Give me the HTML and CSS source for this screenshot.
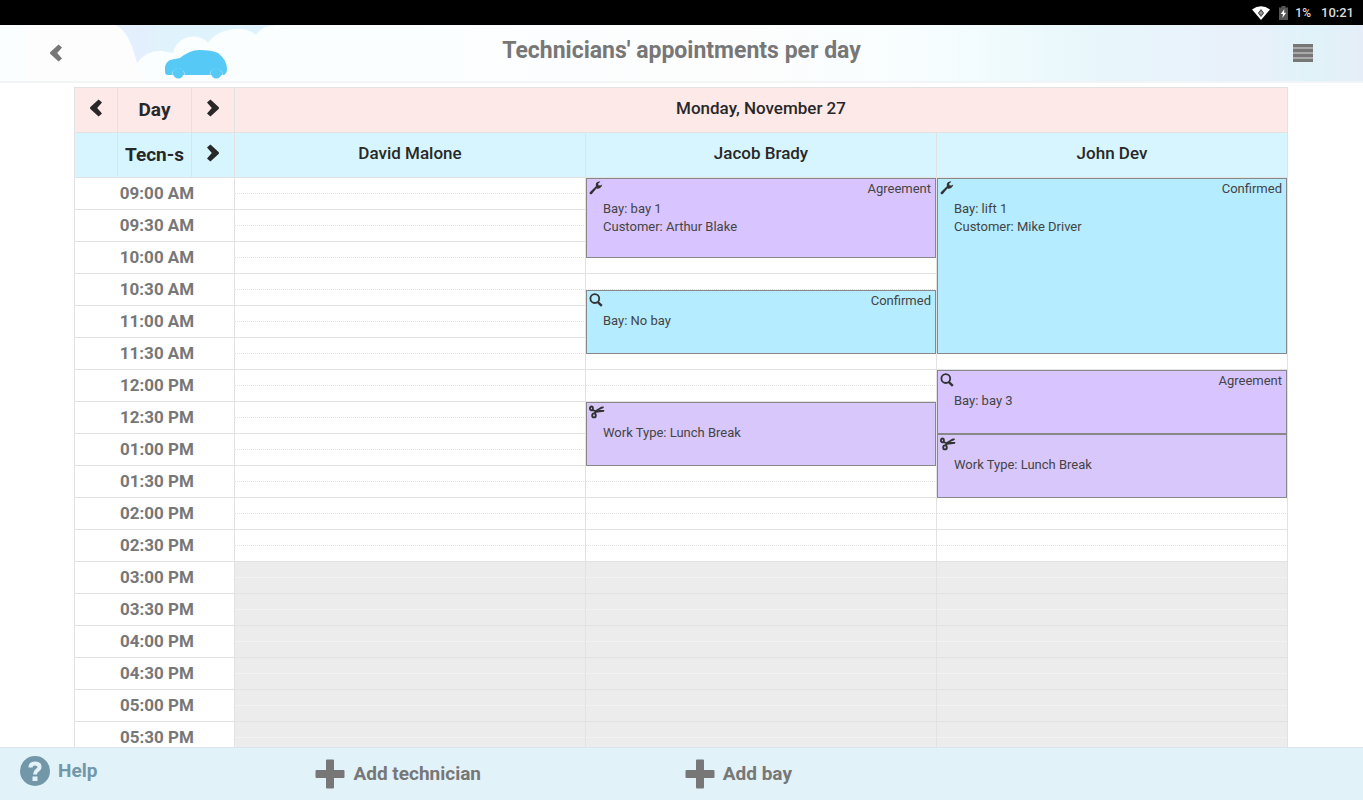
FILE: index.html
```html
<!DOCTYPE html>
<html lang="en">
<head>
    <meta charset="UTF-8">
    <meta name="viewport" content="width=device-width, initial-scale=1">
    <title>Technicians' appointments per day</title>
    <link rel="stylesheet" href="styles.css">
</head>
<body>
    <!-- shared icons -->
    <svg class="sprite" aria-hidden="true">
        <symbol id="chevron-left" viewBox="0 0 12 18">
            <path d="M8.6 0.4 L12 3.6 L7.2 9 L12 14.4 L8.6 17.6 L0.4 10 Q-0.4 9 0.4 8 Z"/>
        </symbol>
        <symbol id="chevron-right" viewBox="0 0 12 18">
            <path d="M3.4 0.4 L0 3.6 L4.8 9 L0 14.4 L3.4 17.6 L11.6 10 Q12.4 9 11.6 8 Z"/>
        </symbol>
        <symbol id="wrench" viewBox="0 0 14 14">
            <path d="M11.4 0.8 C9.6 0 7 1.2 6.8 3.6 L6.9 5.2 L0.8 11.2 C0 12.2 1.6 14 2.8 13.1 L7.4 7.6 C9.6 7.9 12.6 7 13.2 3.4 L11.4 4.6 L9.4 4.2 L9.2 2.6 Z"/>
        </symbol>
        <symbol id="search" viewBox="0 0 14 14">
            <circle cx="5.8" cy="5.6" r="4.4" fill="none" stroke="currentColor" stroke-width="1.8"/>
            <path d="M8.6 8.8 L12.8 12.8" stroke="currentColor" stroke-width="2.4"/>
        </symbol>
        <symbol id="scissors" viewBox="0 0 16 14">
            <g fill="none" stroke="currentColor" stroke-width="1.9">
                <ellipse cx="2.4" cy="3.4" rx="1.5" ry="1.9"/>
                <ellipse cx="5" cy="10.4" rx="1.8" ry="2"/>
                <path d="M3.6 5.2 L7 6.2 L5.6 8.6"/>
            </g>
            <path d="M6.4 5.2 L12.6 1.6 L15 1.8 L14.6 3 L10 5 L15.4 5 L15 6.8 L7 7.8 Z"/>
        </symbol>
        <symbol id="plus" viewBox="0 0 30 30">
            <path d="M12 0.5 H18 Q19 0.5 19 1.5 V11 H28.5 Q29.5 11 29.5 12 V18 Q29.5 19 28.5 19 H19 V28.5 Q19 29.5 18 29.5 H12 Q11 29.5 11 28.5 V19 H1.5 Q0.5 19 0.5 18 V12 Q0.5 11 1.5 11 H11 V1.5 Q11 0.5 12 0.5 Z"/>
        </symbol>
    </svg>

    <div class="status-bar">
        <svg class="wifi" viewBox="0 0 18 14">
            <path d="M0 3.6 Q9 -3 18 3.6 L9 14 Z" fill="#fff"/>
            <path d="M9 3 L12 7 L9 11 L6 7 Z" fill="#333"/>
            <path d="M9 4.6 V9.6 M7 7 H11" stroke="#bbb" stroke-width="1"/>
        </svg>
        <svg class="battery" viewBox="0 0 9 14">
            <path d="M2.5 0 H6.5 V1.5 H9 V14 H0 V1.5 H2.5 Z" fill="#555"/>
            <path d="M5.4 3 L1.8 8 H4 L3.4 12 L7.2 6.8 H5 Z" fill="#fff"/>
        </svg>
        <span>1%</span>
        <span class="clock">10:21</span>
    </div>

    <header class="header">
        <svg class="header-art" viewBox="0 0 300 56" aria-hidden="true">
            <defs>
                <linearGradient id="sky">
                    <stop offset="0" stop-color="#e6f0fd"/>
                    <stop offset="0.2" stop-color="#e4effd"/>
                    <stop offset="0.3" stop-color="#e0f3fc"/>
                    <stop offset="1" stop-color="#dff3fd"/>
                </linearGradient>
            </defs>
            <path d="M112 0 H275 L262 10 V56 H136 Z" fill="url(#sky)"/>
            <path d="M137 38 Q146 25 162 26 Q168 27 173 28 C178 8 200 8 208 18 C218 2 246 0 256 10 Q262 0 278 0 H300 V56 H130 Z" fill="#fbfeff"/>
            <path d="M28 0 H114 C126 2 133 22 137 38 L145 56 H28 Z" fill="#fdfdfe"/>
            <path d="M165 47 V42 Q166 37 170 35 L180 33 Q190 25 199 25 Q212 25 218 28 Q223 32 225 36 Q227 40 227 44 Q227 48 224 50 H168 Q165 50 165 47 Z" fill="#56c9f6"/>
            <g fill="#56c9f6" stroke="#a3e1fa" stroke-width="1">
                <path d="M172 50 A6.300 6.300 0 1 1 184.600 50"/>
                <path d="M210 50 A6.300 6.300 0 1 1 222.600 50"/>
            </g>
            <circle cx="178.300" cy="48.200" r="5.200" fill="#56c9f6"/>
            <circle cx="216.300" cy="48.200" r="5.200" fill="#56c9f6"/>
        </svg>
        <button type="button" class="icon-btn back" aria-label="Back"><svg class="chevron"><use href="#chevron-left"/></svg></button>
        <h1>Technicians' appointments per day</h1>
        <button type="button" class="icon-btn menu" aria-label="Menu">
            <svg viewBox="0 0 20 20">
                <path d="M0 2.500 H20 M0 7.500 H20 M0 12.500 H20 M0 17.500 H20" stroke="#777" stroke-width="3"/>
                <path d="M0 5 H20 M0 10 H20 M0 15 H20" stroke="#aaa" stroke-width="2"/>
            </svg>
        </button>
    </header>

    <main class="calendar">
        <table>
            <colgroup>
                <col class="col-arrow">
                <col class="col-label">
                <col class="col-arrow">
                <col>
                <col>
                <col>
            </colgroup>
            <thead>
                <tr class="day-row">
                    <td><button type="button" class="icon-btn" aria-label="Previous day"><svg class="chevron"><use href="#chevron-left"/></svg></button></td>
                    <th class="label">Day</th>
                    <td><button type="button" class="icon-btn" aria-label="Next day"><svg class="chevron"><use href="#chevron-right"/></svg></button></td>
                    <th colspan="3">Monday, November 27</th>
                </tr>
                <tr class="tech-row">
                    <td></td>
                    <th class="label">Tecn-s</th>
                    <td><button type="button" class="icon-btn" aria-label="Next technicians"><svg class="chevron"><use href="#chevron-right"/></svg></button></td>
                    <th>David Malone</th>
                    <th>Jacob Brady</th>
                    <th>John Dev</th>
                </tr>
            </thead>
            <tbody>
                <tr>
                    <th colspan="3">09:00 AM</th>
                    <td></td>
                    <td>
                        <div class="event agreement slots-2-5">
                            <svg class="event-icon"><use href="#wrench"/></svg>
                            <span class="event-status">Agreement</span>
                            <p>Bay: bay 1</p>
                            <p>Customer: Arthur Blake</p>
                        </div>
                    </td>
                    <td>
                        <div class="event confirmed slots-5-5">
                            <svg class="event-icon"><use href="#wrench"/></svg>
                            <span class="event-status">Confirmed</span>
                            <p>Bay: lift 1</p>
                            <p>Customer: Mike Driver</p>
                        </div>
                    </td>
                </tr>
                <tr><th colspan="3">09:30 AM</th><td></td><td></td><td></td></tr>
                <tr><th colspan="3">10:00 AM</th><td></td><td></td><td></td></tr>
                <tr>
                    <th colspan="3">10:30 AM</th>
                    <td></td>
                    <td>
                        <div class="event confirmed slots-2 half">
                            <svg class="event-icon"><use href="#search"/></svg>
                            <span class="event-status">Confirmed</span>
                            <p>Bay: No bay</p>
                        </div>
                    </td>
                    <td></td>
                </tr>
                <tr><th colspan="3">11:00 AM</th><td></td><td></td><td></td></tr>
                <tr><th colspan="3">11:30 AM</th><td></td><td></td><td></td></tr>
                <tr>
                    <th colspan="3">12:00 PM</th>
                    <td></td>
                    <td></td>
                    <td>
                        <div class="event agreement slots-2">
                            <svg class="event-icon"><use href="#search"/></svg>
                            <span class="event-status">Agreement</span>
                            <p>Bay: bay 3</p>
                        </div>
                    </td>
                </tr>
                <tr>
                    <th colspan="3">12:30 PM</th>
                    <td></td>
                    <td>
                        <div class="event break slots-2">
                            <svg class="event-icon scissors"><use href="#scissors"/></svg>
                            <p>Work Type: Lunch Break</p>
                        </div>
                    </td>
                    <td></td>
                </tr>
                <tr>
                    <th colspan="3">01:00 PM</th>
                    <td></td>
                    <td></td>
                    <td>
                        <div class="event break slots-2">
                            <svg class="event-icon scissors"><use href="#scissors"/></svg>
                            <p>Work Type: Lunch Break</p>
                        </div>
                    </td>
                </tr>
                <tr><th colspan="3">01:30 PM</th><td></td><td></td><td></td></tr>
                <tr><th colspan="3">02:00 PM</th><td></td><td></td><td></td></tr>
                <tr><th colspan="3">02:30 PM</th><td></td><td></td><td></td></tr>
                <tr class="closed"><th colspan="3">03:00 PM</th><td></td><td></td><td></td></tr>
                <tr class="closed"><th colspan="3">03:30 PM</th><td></td><td></td><td></td></tr>
                <tr class="closed"><th colspan="3">04:00 PM</th><td></td><td></td><td></td></tr>
                <tr class="closed"><th colspan="3">04:30 PM</th><td></td><td></td><td></td></tr>
                <tr class="closed"><th colspan="3">05:00 PM</th><td></td><td></td><td></td></tr>
                <tr class="closed"><th colspan="3">05:30 PM</th><td></td><td></td><td></td></tr>
            </tbody>
        </table>
    </main>

    <footer class="footer">
        <button type="button" class="footer-btn help">
            <svg viewBox="0 0 30 30">
                <circle cx="15" cy="15" r="15" fill="#7297a8"/>
                <path d="M10.500 11.500 Q10.500 7.500 15 7.500 Q19.500 7.500 19.500 11 Q19.500 13 17 14.500 Q15 16 15 18.500" fill="none" stroke="#e3f2f8" stroke-width="4"/>
                <path d="M12.500 20.500 H17.500 V25 H12.500 Z" fill="#e3f2f8"/>
            </svg>
            Help
        </button>
        <button type="button" class="footer-btn"><svg><use href="#plus"/></svg>Add technician</button>
        <button type="button" class="footer-btn"><svg><use href="#plus"/></svg>Add bay</button>
    </footer>
</body>
</html>
```
FILE: styles.css
```css
* {
    box-sizing: border-box;
}
body {
    margin: 0;
    height: 100vh;
    display: flex;
    flex-direction: column;
    overflow: hidden;
    font-family: Roboto, sans-serif;
    color: #333;
    background: #fff;
}
button {
    font: inherit;
    color: inherit;
    background: none;
    border: none;
    padding: 0;
    cursor: pointer;
}
svg {
    display: block;
    fill: currentColor;
}
.sprite {
    display: none;
}

/* status bar */
.status-bar {
    flex: none;
    height: 25px;
    display: flex;
    align-items: center;
    justify-content: flex-end;
    padding-right: 9px;
    background: #000;
    color: #ddd;
    font-size: 12px;
    font-weight: 500;
}
.wifi {
    width: 18px;
    height: 14px;
    margin-right: 9px;
}
.battery {
    width: 9px;
    height: 14px;
    margin-right: 7px;
}
.clock {
    margin-left: 10px;
    font-size: 13px;
}

/* header */
.header {
    flex: none;
    position: relative;
    height: 58px;
    display: grid;
    grid-template-columns: 1fr auto 1fr;
    align-items: center;
    padding: 0 50px;
    color: #777;
    background: linear-gradient(90deg, #fbfeff 30%, #fdfdfd 55%, #f8feff 67%, #e8f7fb 80%, #e8f0fa 92%, #e0f3f9 96%, #e5eef8);
    border-bottom: 2px solid #f2f5f6;
}
.header-art {
    position: absolute;
    left: 0;
    top: 0;
    width: 300px;
    height: 56px;
}
.header h1 {
    margin: 0;
    padding-bottom: 4px;
    font-size: 23px;
    font-weight: 700;
    line-height: 28px;
}
.icon-btn {
    display: block;
    margin: 0 auto;
}
.header .icon-btn {
    position: relative;
    margin: 0;
    justify-self: start;
}
.header .menu {
    justify-self: end;
}
.chevron {
    width: 12px;
    height: 18px;
}
.menu svg {
    width: 20px;
    height: 20px;
}

/* calendar */
.calendar {
    flex: 1;
    min-height: 0;
    overflow: hidden;
    padding: 4px 75px 0 74px;
}
table {
    width: 100%;
    table-layout: fixed;
    border-collapse: separate;
    border-spacing: 0;
    border-left: 1px solid #e2e2e2;
    border-top: 1px solid #e2e2e2;
}
.col-arrow {
    width: 43px;
}
.col-label {
    width: 74px;
}
th, td {
    padding: 0;
    border-right: 1px solid #e2e2e2;
    border-bottom: 1px solid #e2e2e2;
}
thead th, thead td {
    height: 45px;
    padding-bottom: 4px;
    color: #282828;
    font-size: 17px;
    font-weight: 500;
}
thead .label {
    padding-bottom: 2px;
    font-size: 19px;
    font-weight: 700;
}
.day-row {
    background: #fde9e8;
}
.tech-row {
    background: #d6f5fe;
}
tbody th {
    height: 32px;
    padding: 0 0 1px 5px;
    color: #777;
    font-size: 17px;
    font-weight: 700;
    line-height: 20px;
}
tbody td {
    position: relative;
    background: linear-gradient(90deg, #e2e2e2 50%, transparent 50%) 0 50% / 2px 1px repeat-x;
}
.closed td {
    background-color: #ececec;
    background-image: linear-gradient(90deg, #f8f8f8 50%, transparent 50%);
}

/* appointments */
.event {
    position: absolute;
    z-index: 1;
    top: 0;
    left: 0;
    right: 0;
    padding: 21px 16px 0;
    border: 1px solid #888;
    color: #444;
    font-size: 13px;
    line-height: 18px;
}
.event.half {
    top: 50%;
}
.slots-2 {
    height: 64px;
}
.slots-2-5 {
    height: 80px;
}
.slots-5-5 {
    height: 176px;
}
.agreement {
    background: #d8c4fe;
}
.break {
    background: #d8c7fb;
}
.confirmed {
    background: #b5ecff;
}
.event p {
    margin: 0;
}
.event-icon {
    position: absolute;
    left: 2px;
    top: 2px;
    width: 14px;
    height: 14px;
    color: #333;
}
.event-icon.scissors {
    width: 16px;
}
.event-status {
    position: absolute;
    right: 4px;
    top: 1px;
}

/* footer */
.footer {
    flex: none;
    height: 53px;
    display: grid;
    grid-template-columns: 44fr 55fr 101fr;
    align-items: center;
    padding-left: 20px;
    background: #e1f2f8;
    border-top: 1px solid #dde6ea;
}
.footer-btn {
    display: flex;
    align-items: center;
    gap: 8px;
    color: #777;
    font-size: 19px;
    font-weight: 700;
    line-height: 24px;
}
.footer-btn svg {
    width: 30px;
    height: 30px;
}
.help {
    padding-bottom: 6px;
    color: #7297a8;
}
```
